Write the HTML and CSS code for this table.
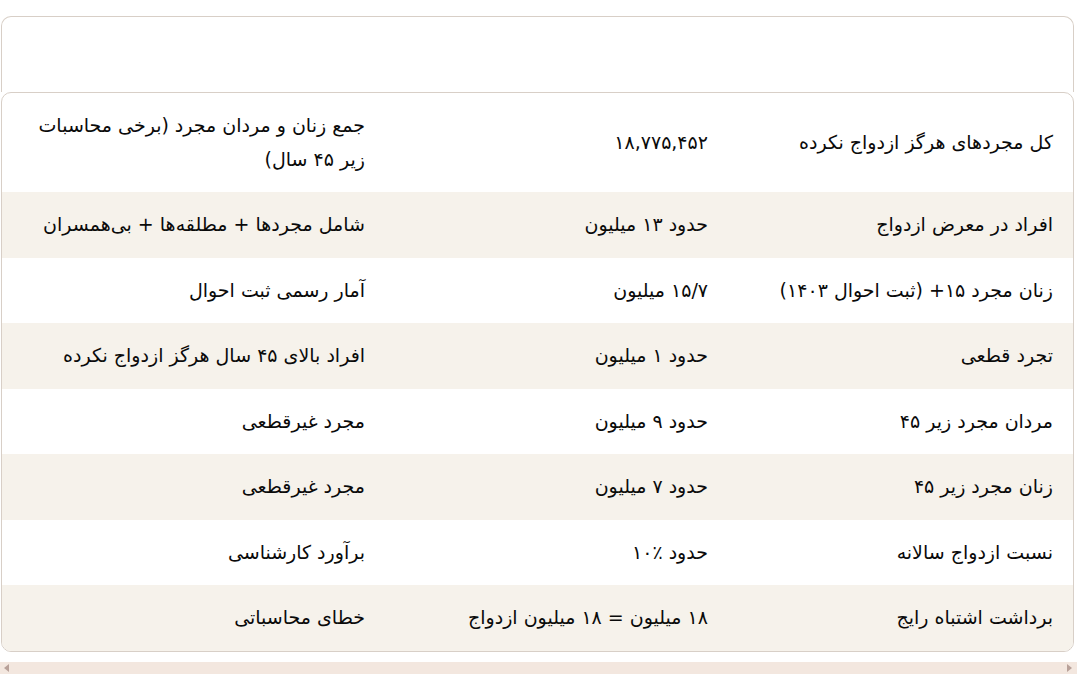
FILE: index.html
```html
<!DOCTYPE html>
<html lang="fa" dir="rtl">
<head>
<meta charset="utf-8">
<title>آمار مجردها</title>
<link rel="stylesheet" href="styles.css">
</head>
<body>
<div class="wrap">
  <div class="panel"></div>
  <div class="card">
    <table class="stats">
      <colgroup>
        <col class="col-label">
        <col class="col-value">
        <col class="col-note">
      </colgroup>
      <tbody>
        <tr>
          <td>کل مجردهای هرگز ازدواج نکرده</td>
          <td>۱۸,۷۷۵,۴۵۲</td>
          <td>جمع زنان و مردان مجرد (برخی محاسبات زیر ۴۵ سال)</td>
        </tr>
        <tr>
          <td>افراد در معرض ازدواج</td>
          <td>حدود ۱۳ میلیون</td>
          <td>شامل مجردها + مطلقه‌ها + بی‌همسران</td>
        </tr>
        <tr>
          <td>زنان مجرد ۱۵+ (ثبت احوال ۱۴۰۳)</td>
          <td>۱۵/۷ میلیون</td>
          <td>آمار رسمی ثبت احوال</td>
        </tr>
        <tr>
          <td>تجرد قطعی</td>
          <td>حدود ۱ میلیون</td>
          <td>افراد بالای ۴۵ سال هرگز ازدواج نکرده</td>
        </tr>
        <tr>
          <td>مردان مجرد زیر ۴۵</td>
          <td>حدود ۹ میلیون</td>
          <td>مجرد غیرقطعی</td>
        </tr>
        <tr>
          <td>زنان مجرد زیر ۴۵</td>
          <td>حدود ۷ میلیون</td>
          <td>مجرد غیرقطعی</td>
        </tr>
        <tr>
          <td>نسبت ازدواج سالانه</td>
          <td>حدود ٪۱۰</td>
          <td>برآورد کارشناسی</td>
        </tr>
        <tr>
          <td>برداشت اشتباه رایج</td>
          <td>۱۸ میلیون = ۱۸ میلیون ازدواج</td>
          <td>خطای محاسباتی</td>
        </tr>
      </tbody>
    </table>
  </div>
</div>
<div class="hscroll" aria-hidden="true">
  <span class="arrow arrow-left"></span>
  <span class="arrow arrow-right"></span>
</div>
</body>
</html>
```

FILE: styles.css
```css
html, body {
  margin: 0;
  padding: 0;
  background: #ffffff;
}

body {
  font-family: "DejaVu Sans", "Liberation Sans", sans-serif;
  font-size: 19px;
  color: #0a0a0a;
}

.wrap {
  padding: 16px 3px 10px 1px;
}

.panel {
  height: 75px;
  border: 1px solid #d8cfc7;
  border-bottom: none;
  border-radius: 10px 10px 0 0;
}

.card {
  border: 1px solid #d8cfc7;
  border-radius: 10px;
  overflow: hidden;
  background: #ffffff;
}

.stats {
  width: 100%;
  border-collapse: collapse;
  table-layout: fixed;
}

.col-label { width: 345px; }
.col-value { width: 343px; }

.stats td {
  padding: 16px 20px;
  line-height: 33.5px;
  text-align: right;
  vertical-align: middle;
}

.stats tr:nth-child(even) td {
  background: #f6f2eb;
}

.hscroll {
  direction: ltr;
  height: 12px;
  background: #f3e7df;
  display: flex;
  align-items: center;
  justify-content: space-between;
  padding: 0 5px 0 4px;
}

.arrow {
  width: 0;
  height: 0;
  border-top: 4px solid transparent;
  border-bottom: 4px solid transparent;
}

.arrow-left {
  border-right: 5px solid #b8a199;
}

.arrow-right {
  border-left: 5px solid #b8a199;
}
```
